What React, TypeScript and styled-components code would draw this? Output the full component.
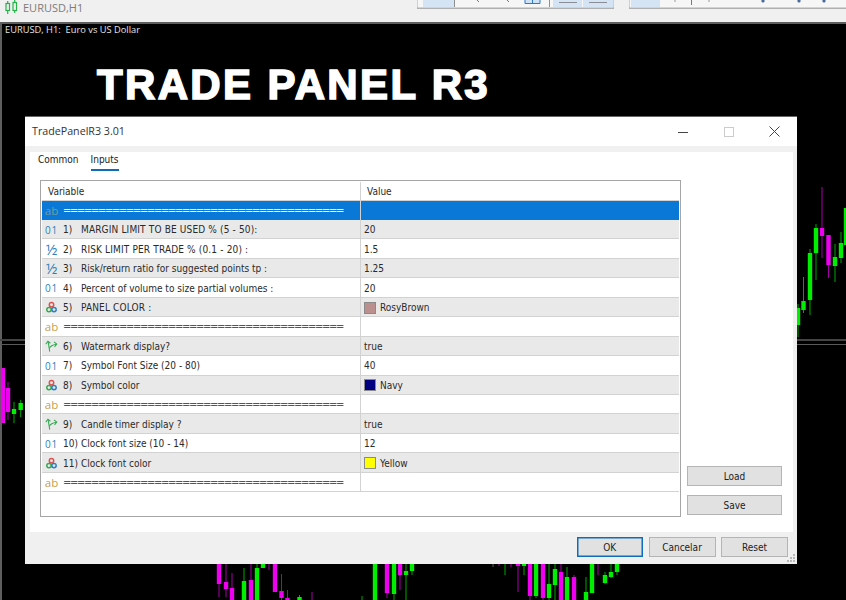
import React from "react";
import styled, { createGlobalStyle } from "styled-components";

const Global = createGlobalStyle`
  html, body { margin: 0; padding: 0; width: 846px; height: 600px; overflow: hidden; background: #000; }
  * { box-sizing: border-box; }
`;

const UIFONT = `condensed 10px "DejaVu Sans", sans-serif`;

const Page = styled.div`
  width: 846px;
  height: 600px;
  display: flex;
  flex-direction: column;
  overflow: hidden;
`;

const TopBar = styled.header`
  height: 22px;
  flex: none;
  background: #f0f0f0;
  display: flex;
  align-items: flex-start;
`;

const ChartTab = styled.div`
  display: flex;
  align-items: center;
  gap: 5px;
  padding: 0 0 0 5px;
  height: 14px;
  font: 11px "Open Sans", sans-serif;
  color: #7c7c7c;
`;

const Toolbars = styled.div`
  margin-left: auto;
  display: flex;
  gap: 15px;
`;

const ToolbarArt = styled.svg`
  display: block;
`;

const ChartArea = styled.main`
  position: relative;
  flex: 1;
  background: #000;
  border-top: 2px solid #5e5e5e;
  border-left: 2px solid #5e5e5e;
`;

const ChartLabel = styled.div`
  position: absolute;
  left: 3px;
  top: -1px;
  height: 14px;
  font: 9.3px/14px "Open Sans", sans-serif;
  color: #e4e4e4;
  white-space: pre;
`;

const Watermark = styled.div`
  position: absolute;
  left: 95px;
  top: 37px;
  font: bold 42px/48px "Liberation Sans", sans-serif;
  letter-spacing: 2.35px;
  color: #fff;
  -webkit-text-stroke: 1.6px #fff;
  white-space: nowrap;
`;

const Candles = styled.svg`
  position: absolute;
  left: -2px;
  top: -24px;
`;

const Dialog = styled.section`
  position: absolute;
  left: 23px;
  top: 93px;
  width: 772px;
  height: 447px;
  background: #f0f0f0;
  display: flex;
  flex-direction: column;
  box-shadow: 0 -1px 0 #666;
  color: #222;
`;

const TitleBar = styled.div`
  height: 29px;
  flex: none;
  background: #fff;
  display: flex;
  align-items: center;
  padding-left: 7px;
  font: 10.7px "Open Sans", sans-serif;
  color: #333;
`;

const TitleText = styled.span`
  flex: 1;
  padding-bottom: 1px;
`;

const WinButton = styled.div`
  width: 45.5px;
  height: 29px;
  display: flex;
  align-items: center;
  justify-content: center;
`;

const TabPanel = styled.div`
  flex: none;
  margin: 6px 4px 0 5px;
  height: 380px;
  background: #fff;
  display: flex;
  flex-direction: column;
`;

const Tabs = styled.div`
  height: 28px;
  flex: none;
  display: flex;
  gap: 12px;
  padding-left: 8px;
`;

const Tab = styled.div<{ $active?: boolean }>`
  height: 19px;
  font: ${UIFONT};
  line-height: 15px;
  color: #222;
  border-bottom: ${(p) => (p.$active ? "2px solid #0f6cbd" : "0")};
`;

const Body = styled.div`
  flex: 1;
  display: flex;
  padding-left: 10px;
`;

const Grid = styled.div`
  width: 641px;
  height: 337px;
  border: 1px solid #a5a5a5;
  padding: 0 1px;
  background: #fff;
  display: flex;
  flex-direction: column;
  overflow: hidden;
`;

const Row = styled.div<{ $bg: string; $header?: boolean; $sel?: boolean }>`
  flex: none;
  height: ${(p) => (p.$header ? "19.6px" : "19.45px")};
  display: flex;
  padding-top: ${(p) => (p.$header ? "1px" : "0")};
  background: ${(p) => p.$bg};
  box-shadow: inset 0 -1px 0 ${(p) => (p.$sel ? "#0a78d7" : "#d2d2d2")};
`;

const VarCell = styled.div`
  width: 319px;
  flex: none;
  display: flex;
  align-items: center;
  padding-left: 3px;
  border-right: 1px solid #d2d2d2;
  white-space: nowrap;
`;

const ValCell = styled.div`
  flex: 1;
  display: flex;
  align-items: center;
  gap: 4px;
  padding-left: 3px;
`;

const Label = styled.span<{ $caps?: boolean }>`
  font: ${UIFONT};
  letter-spacing: ${(p) => (p.$caps ? "0.15px" : "0")};
  color: #2a2a2a;
  white-space: pre;
`;

const Num = styled(Label)`
  width: 18px;
  flex: none;
`;

const Separator = styled.span<{ $sel?: boolean }>`
  font: 10px "DejaVu Sans", sans-serif;
  letter-spacing: -1.38px;
  color: ${(p) => (p.$sel ? "#fff" : "#555")};
  white-space: pre;
`;

const HeaderLabel = styled(Label)`
  padding-left: 3px;
`;

const IconSlot = styled.span<{ $color: string; $size: number; $spacing?: number }>`
  width: 13px;
  flex: none;
  margin-right: 5px;
  display: flex;
  align-items: center;
  justify-content: center;
  font: ${(p) => p.$size}px/1 "Open Sans", sans-serif;
  letter-spacing: ${(p) => p.$spacing ?? 0}px;
  color: ${(p) => p.$color};
`;

const Swatch = styled.span<{ $color: string }>`
  width: 12px;
  height: 12px;
  flex: none;
  background: ${(p) => p.$color};
  border: 1px solid #8a8a8a;
`;

const Side = styled.div`
  flex: 1;
  display: flex;
  flex-direction: column;
  gap: 9px;
  padding: 286px 0 0 6px;
`;

const Footer = styled.div`
  flex: 1;
  display: flex;
  justify-content: flex-end;
  gap: 5.5px;
  padding: 5px 9px 0 0;
  position: relative;
`;

const Btn = styled.div<{ $w: number; $primary?: boolean }>`
  width: ${(p) => p.$w}px;
  height: 20px;
  display: flex;
  align-items: center;
  justify-content: center;
  background: #e1e1e1;
  border: 1px solid ${(p) => (p.$primary ? "#0f6cbd" : "#b4b4b4")};
  box-shadow: ${(p) => (p.$primary ? "inset 0 0 0 0.5px #0f6cbd" : "none")};
  font: ${UIFONT};
  color: #222;
`;

const Grip = styled.svg`
  position: absolute;
  right: 1px;
  bottom: 1px;
`;

type Kind = "ab" | "int" | "dbl" | "col" | "bool";

const ColorIcon = () => (
  <svg width="13" height="13" viewBox="0 0 13 13">
    <circle cx="6.5" cy="3.8" r="2.2" fill="none" stroke="#d9534f" strokeWidth="1.5" />
    <circle cx="4" cy="8.6" r="2.2" fill="none" stroke="#3aa655" strokeWidth="1.5" />
    <circle cx="9" cy="8.6" r="2.2" fill="none" stroke="#2f7fc4" strokeWidth="1.5" />
  </svg>
);

const BoolIcon = () => (
  <svg width="15" height="14" viewBox="0 0 15 14" fill="none" stroke="#35a852" strokeWidth="1.2">
    <path d="M5.5 13.5 L3.6 2" />
    <path d="M1 4.8 L3.4 1.5 L6.2 3.8" />
    <path d="M5 9.5 C6 7.5 8 6 13 5" />
    <path d="M10.4 2.2 L13.6 4.9 L11 8" />
  </svg>
);

const Icon = ({ kind, sel }: { kind: Kind; sel?: boolean }) => {
  if (kind === "ab") return <IconSlot $size={11.5} $color={sel ? "#6f9e9c" : "#c9a04c"}>ab</IconSlot>;
  if (kind === "int") return <IconSlot $size={10} $spacing={0.8} $color="#2e7fb8">01</IconSlot>;
  if (kind === "dbl") return <IconSlot $size={15} $color="#2e7fb8">½</IconSlot>;
  if (kind === "col") return <IconSlot $size={10} $color="#000"><ColorIcon /></IconSlot>;
  return <IconSlot $size={10} $color="#000"><BoolIcon /></IconSlot>;
};

const SEP = "========================================";

type RowData = { kind: Kind; num?: string; label?: string; caps?: boolean; value?: string; swatch?: string };

const rows: RowData[] = [
  { kind: "ab" },
  { kind: "int", num: "1)", label: "MARGIN LIMIT TO BE USED % (5 - 50):", caps: true, value: "20" },
  { kind: "dbl", num: "2)", label: "RISK LIMIT PER TRADE % (0.1 - 20) :", caps: true, value: "1.5" },
  { kind: "dbl", num: "3)", label: "Risk/return ratio for suggested points tp :", value: "1.25" },
  { kind: "int", num: "4)", label: "Percent of volume to size partial volumes :", value: "20" },
  { kind: "col", num: "5)", label: "PANEL COLOR :", caps: true, value: "RosyBrown", swatch: "#bc8f8f" },
  { kind: "ab" },
  { kind: "bool", num: "6)", label: "Watermark display?", value: "true" },
  { kind: "int", num: "7)", label: "Symbol Font Size (20 - 80)", value: "40" },
  { kind: "col", num: "8)", label: "Symbol color", value: "Navy", swatch: "#000080" },
  { kind: "ab" },
  { kind: "bool", num: "9)", label: "Candle timer display ?", value: "true" },
  { kind: "int", num: "10)", label: "Clock font size (10 - 14)", value: "12" },
  { kind: "col", num: "11)", label: "Clock font color", value: "Yellow", swatch: "#ffff00" },
  { kind: "ab" },
];

const G = "#00ee00";
const M = "#f000f0";
// x centre, wick top, wick bottom, body top, body bottom, colour
const candles: [number, number, number, number, number, string][] = [
  [3, 368, 423, 368, 423, M], [8, 382, 420, 388, 412, M], [14, 402, 423, 409, 414, G], [20.7, 400, 417, 403, 410, G],
  [219, 564, 597, 564, 584, M], [226, 564, 597, 582, 589, M], [232, 573, 600, 588, 600, M],
  [244, 568, 600, 581, 600, G], [251, 564, 600, 580, 600, M], [257, 564, 600, 568, 600, G],
  [263, 564, 568, 564, 568, G], [269, 564, 570, 564, 564, M], [275, 564, 592, 564, 592, M],
  [281.5, 574, 600, 591, 598, M], [287.5, 590, 600, 598, 600, M], [299.5, 595, 600, 597, 600, G],
  [312, 592, 600, 600, 600, M], [362, 596, 600, 600, 600, G],
  [375, 564, 600, 564, 600, G], [387, 564, 598, 564, 593, M], [394, 564, 600, 564, 594, G],
  [400, 564, 590, 564, 575, M], [406, 564, 600, 571, 575, G], [412, 564, 575, 564, 571, G],
  [493, 564, 567, 564, 564, "#888"], [499, 564, 566, 564, 564, M], [505, 564, 575, 564, 564, G],
  [511, 564, 567, 564, 564, M], [518, 564, 592, 564, 566, M], [524, 564, 575, 564, 566, G],
  [530, 564, 600, 564, 596, M], [536, 564, 598, 564, 596, G], [543, 564, 600, 564, 598, M],
  [549, 564, 600, 584, 598, G], [555, 564, 600, 569, 585, G], [561, 564, 600, 572, 600, M],
  [567, 567, 600, 577, 600, G], [574, 575, 600, 577, 600, M], [586, 577, 600, 592, 600, G],
  [592, 564, 593, 564, 593, G], [598, 564, 575, 564, 564, M], [605, 572, 584, 575, 583, G],
  [611, 564, 578, 572, 577, G], [617, 564, 575, 564, 572, G],
  [798, 304, 337, 308, 325, G], [803.5, 277, 313, 301, 310, G], [810, 249, 315, 253, 300, G],
  [816, 224, 280, 228, 253, G], [822, 187, 258, 228, 236, M], [828.5, 235, 278, 235, 265, M],
  [835, 244, 282, 257, 266, G], [841, 232, 263, 243, 258, G], [846, 208, 245, 208, 245, G],
];

const Chart = () => (
  <Candles width="846" height="600" viewBox="0 0 846 600">
    <rect x="0" y="339" width="846" height="2" fill="#444" />
    <rect x="0" y="344" width="846" height="1" fill="#5a5a5a" />
    {candles.map(([x, wt, wb, bt, bb, c], i) => (
      <g key={i}>
        <line x1={x} x2={x} y1={wt} y2={wb} stroke={c} strokeOpacity="0.7" />
        {bb > bt && <rect x={x - 2.2} y={bt} width="4.4" height={bb - bt} fill={c} />}
      </g>
    ))}
  </Candles>
);

const ToolbarA = () => (
  <ToolbarArt width="197" height="9" viewBox="0 0 197 9">
    <rect x="0" y="0" width="197" height="8" fill="#f6f6f6" />
    <path d="M0.5 0V8M196.5 0V8" stroke="#cfcfcf" />
    <rect x="0" y="7.5" width="197" height="1.5" fill="#b0b0b0" />
    <rect x="6" y="0" width="31" height="7" fill="#d5e4f5" />
    <path d="M37.5 0V7" stroke="#8f8f8f" />
    <path d="M60 0l2 2M90 0l2 2" stroke="#6a7a8a" />
    <path d="M108 0V3.5H123V0M115.5 0V3.5" fill="#cfe2f7" stroke="#2f78c4" />
    <path d="M132.5 0V7" stroke="#8f8f8f" />
    <rect x="136" y="0" width="29" height="7" fill="#d5e4f5" />
    <rect x="166" y="0" width="30" height="7" fill="#d5e4f5" />
    <path d="M142 2.5H160M172 2.5H190" stroke="#8a8f96" />
  </ToolbarArt>
);

const ToolbarB = () => (
  <ToolbarArt width="217" height="9" viewBox="0 0 217 9">
    <rect x="0" y="0" width="217" height="8" fill="#f6f6f6" />
    <path d="M0.5 0V8" stroke="#cfcfcf" />
    <rect x="0" y="7.5" width="217" height="1.5" fill="#b0b0b0" />
    <rect x="2" y="0" width="29" height="7" fill="#d5e4f5" />
    <path d="M62.5 0V5" stroke="#777" />
    <path d="M45 1h2M80 0v2" stroke="#999" />
    <circle cx="134" cy="1" r="1.6" fill="#4a6a9a" />
    <circle cx="170" cy="1" r="1.6" fill="#4a6a9a" />
    <circle cx="195" cy="1" r="1.6" fill="#4a6a9a" />
  </ToolbarArt>
);

export default function App() {
  return (
    <Page>
      <Global />
      <TopBar>
        <ChartTab>
          <svg width="13" height="14" viewBox="0 0 13 14" fill="none" stroke="#27b24a" strokeWidth="1.2">
            <rect x="1" y="3.5" width="3.5" height="7" />
            <path d="M2.7 1v2.5M2.7 10.5V14" />
            <rect x="8" y="2.5" width="3.5" height="8" />
            <path d="M9.7 0v2.5M9.7 10.5V13" />
          </svg>
          EURUSD,H1
        </ChartTab>
        <Toolbars>
          <ToolbarA />
          <ToolbarB />
        </Toolbars>
      </TopBar>
      <ChartArea>
        <Chart />
        <ChartLabel>EURUSD, H1:  Euro vs US Dollar</ChartLabel>
        <Watermark>TRADE PANEL R3</Watermark>
        <Dialog>
          <TitleBar>
            <TitleText>TradePanelR3 3.01</TitleText>
            <WinButton>
              <svg width="10" height="10" viewBox="0 0 10 10"><path d="M0 5.5h10" stroke="#444" /></svg>
            </WinButton>
            <WinButton>
              <svg width="10" height="10" viewBox="0 0 10 10"><rect x=".5" y=".5" width="9" height="9" fill="none" stroke="#ccc" /></svg>
            </WinButton>
            <WinButton>
              <svg width="11" height="11" viewBox="0 0 11 11"><path d="M0.5 0.5l10 10M10.5 0.5l-10 10" stroke="#444" /></svg>
            </WinButton>
          </TitleBar>
          <TabPanel>
            <Tabs>
              <Tab>Common</Tab>
              <Tab $active>Inputs</Tab>
            </Tabs>
            <Body>
              <Grid>
                <Row $bg="#fff" $header>
                  <VarCell><HeaderLabel>Variable</HeaderLabel></VarCell>
                  <ValCell><HeaderLabel>Value</HeaderLabel></ValCell>
                </Row>
                {rows.map((r, i) => {
                  const selected = i === 0;
                  const bg = selected ? "#0a78d7" : i % 2 === 1 ? "#e9e9e9" : "#fff";
                  return (
                    <Row key={i} $bg={bg} $sel={selected}>
                      <VarCell>
                        <Icon kind={r.kind} sel={selected} />
                        {r.num ? <Num>{r.num}</Num> : <Separator $sel={selected}>{SEP}</Separator>}
                        {r.label && <Label $caps={r.caps}>{r.label}</Label>}
                      </VarCell>
                      <ValCell>
                        {r.swatch && <Swatch $color={r.swatch} />}
                        {r.value && <Label>{r.value}</Label>}
                      </ValCell>
                    </Row>
                  );
                })}
              </Grid>
              <Side>
                <Btn $w={95}>Load</Btn>
                <Btn $w={95}>Save</Btn>
              </Side>
            </Body>
          </TabPanel>
          <Footer>
            <Btn $w={66.5} $primary>OK</Btn>
            <Btn $w={67}>Cancelar</Btn>
            <Btn $w={67}>Reset</Btn>
            <Grip width="10" height="10" viewBox="0 0 10 10" fill="#b9b9b9">
              <rect x="7" y="1" width="2" height="2" /><rect x="7" y="4" width="2" height="2" /><rect x="7" y="7" width="2" height="2" />
              <rect x="4" y="4" width="2" height="2" /><rect x="4" y="7" width="2" height="2" /><rect x="1" y="7" width="2" height="2" />
            </Grip>
          </Footer>
        </Dialog>
      </ChartArea>
    </Page>
  );
}
